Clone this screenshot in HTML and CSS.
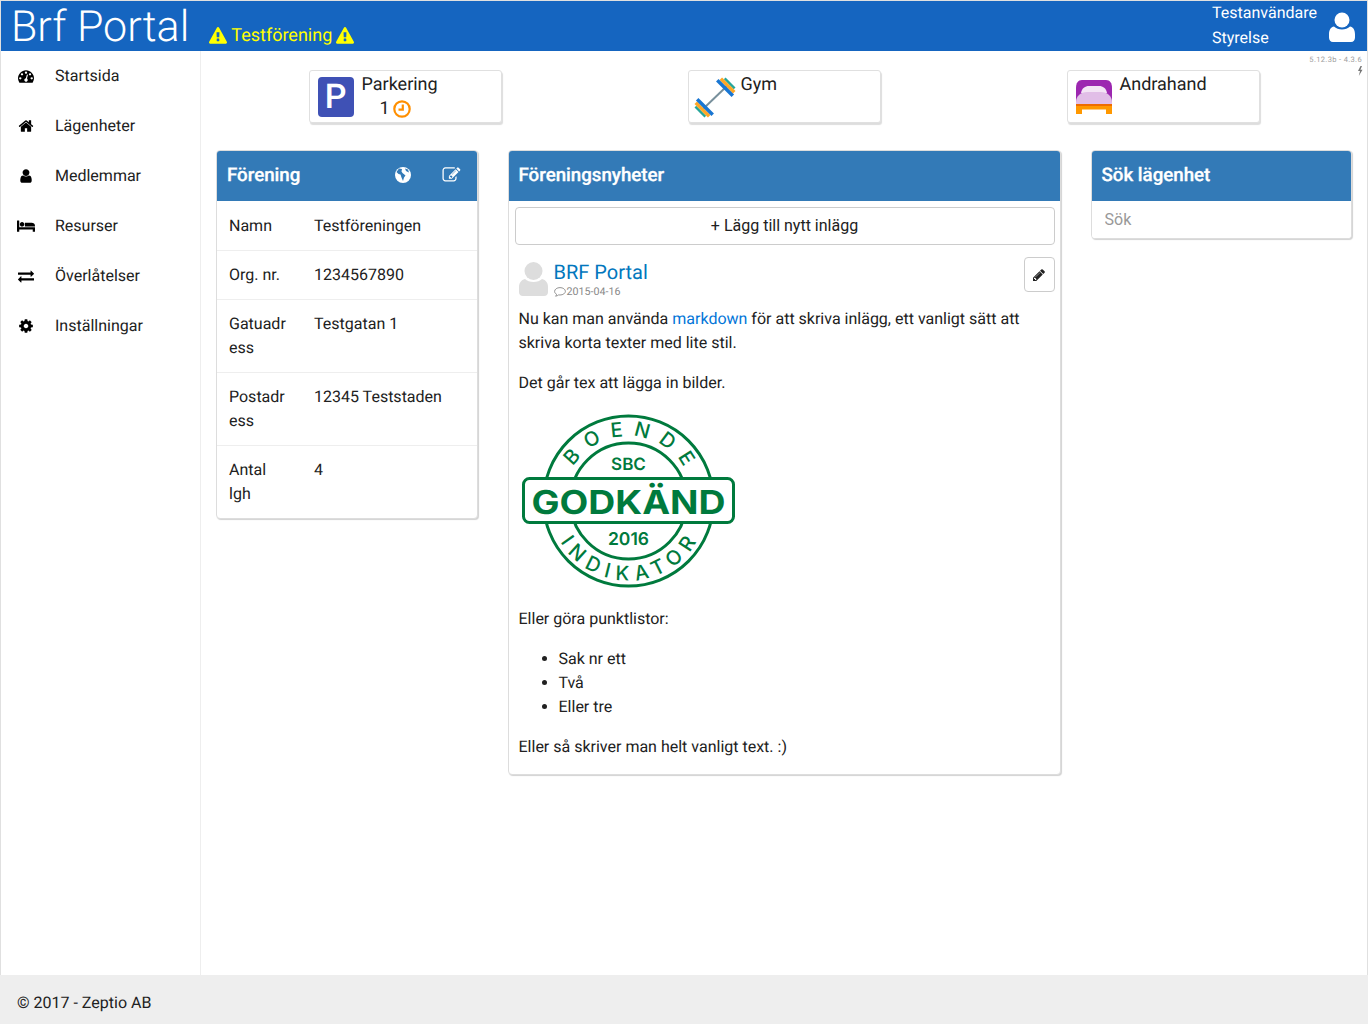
FILE: index.html
```html
<!DOCTYPE html>
<html lang="sv">
<head>
<meta charset="utf-8">
<title>Brf Portal</title>
<link rel="stylesheet" href="styles.css">
</head>
<body>
<div class="page">
  <header class="topbar">
    <div class="brand">Brf Portal</div>
    <div class="org">
      <svg class="warn" viewBox="0 0 1792 1792"><path d="M1024 1375v-190q0-14-9.500-23.500t-22.500-9.500h-192q-13 0-22.500 9.500t-9.500 23.500v190q0 14 9.500 23.500t22.500 9.500h192q13 0 22.500-9.500t9.500-23.500zm-2-374l18-459q0-12-10-19-13-11-24-11h-220q-11 0-24 11-10 7-10 21l17 457q0 10 10 16.500t24 6.500h185q14 0 23.500-6.500t10.500-16.500zm-14-934l768 1408q35 63-2 126-17 29-46.500 46t-63.500 17h-1536q-34 0-63.500-17t-46.500-46q-37-63-2-126l768-1408q17-31 47-49t65-18 65 18 47 49z"/></svg>
      <span>Testförening</span>
      <svg class="warn" viewBox="0 0 1792 1792"><path d="M1024 1375v-190q0-14-9.500-23.500t-22.500-9.500h-192q-13 0-22.500 9.500t-9.500 23.500v190q0 14 9.500 23.500t22.500 9.500h192q13 0 22.500-9.500t9.500-23.500zm-2-374l18-459q0-12-10-19-13-11-24-11h-220q-11 0-24 11-10 7-10 21l17 457q0 10 10 16.500t24 6.500h185q14 0 23.500-6.500t10.500-16.500zm-14-934l768 1408q35 63-2 126-17 29-46.500 46t-63.500 17h-1536q-34 0-63.500-17t-46.500-46q-37-63-2-126l768-1408q17-31 47-49t65-18 65 18 47 49z"/></svg>
    </div>
    <div class="user">
      <div class="user-text"><div>Testanvändare</div><div>Styrelse</div></div>
      <svg class="user-icon" viewBox="0 0 26 30"><circle cx="13" cy="8" r="7.500"/><path d="M5 14.500c2 2 5 3 8 3s6-1 8-3c3 .5 5 3 5 8v3c0 2.500-1.500 4.500-4 4.500H4c-2.500 0-4-2-4-4.500v-3c0-5 2-7.500 5-8z"/></svg>
    </div>
  </header>
  <div class="middle">
    <nav class="sidebar">
      <a class="nav-item"><svg class="nav-icon" viewBox="0 0 1792 1792"><path d="M384 1152q0-53-37.500-90.500t-90.500-37.500-90.500 37.500-37.500 90.500 37.500 90.500 90.500 37.500 90.500-37.500 37.500-90.500zm192-448q0-53-37.500-90.500t-90.500-37.500-90.500 37.500-37.500 90.500 37.500 90.500 90.500 37.500 90.500-37.500 37.500-90.500zm428 481l101-382q6-26-7.500-48.500t-38.500-29.500-48 6.500-30 39.500l-101 382q-60 5-107 43.500t-63 98.500q-20 77 20 146t117 89 146-20 89-117q16-60-6-117t-72-91zm660-33q0-53-37.500-90.500t-90.500-37.500-90.500 37.500-37.500 90.500 37.500 90.500 90.500 37.500 90.500-37.500 37.500-90.500zm-640-640q0-53-37.500-90.500t-90.500-37.500-90.500 37.500-37.500 90.500 37.500 90.500 90.500 37.500 90.500-37.500 37.500-90.500zm448 192q0-53-37.500-90.500t-90.500-37.500-90.500 37.500-37.500 90.500 37.500 90.500 90.500 37.500 90.500-37.500 37.500-90.500zm320 448q0 261-141 483-19 29-54 29h-1402q-35 0-54-29-141-221-141-483 0-182 71-348t191-286 286-191 348-71 348 71 286 191 191 286 71 348z"/></svg><span>Startsida</span></a>
      <a class="nav-item"><svg class="nav-icon" viewBox="0 0 1792 1792"><path d="M1472 992v480q0 26-19 45t-45 19h-384v-384h-256v384h-384q-26 0-45-19t-19-45v-480q0-1 .5-3t.5-3l575-474 575 474q1 2 1 6zm223-69l-62 74q-8 9-21 11h-3q-13 0-21-7l-692-577-692 577q-12 8-24 7-13-2-21-11l-62-74q-8-10-7-23.500t11-21.500l719-599q32-26 76-26t76 26l244 204v-195q0-14 9-23t23-9h192q14 0 23 9t9 23v408l219 182q10 8 11 21.500t-7 23.500z"/></svg><span>Lägenheter</span></a>
      <a class="nav-item"><svg class="nav-icon" viewBox="0 0 1792 1792"><path d="M1536 1399q0 109-62.500 187t-150.500 78h-854q-88 0-150.500-78t-62.500-187q0-85 8.500-160.500t31.500-152 58.500-131 94-89 134.500-34.500q131 128 313 128t313-128q76 0 134.500 34.500t94 89 58.500 131 31.500 152 8.500 160.500zm-256-887q0 159-112.500 271.500t-271.500 112.500-271.500-112.500-112.500-271.500 112.500-271.500 271.500-112.500 271.500 112.500 112.500 271.500z"/></svg><span>Medlemmar</span></a>
      <a class="nav-item"><svg class="nav-icon" viewBox="0 0 2048 1792"><path d="M256 1024h1728q26 0 45 19t19 45v448h-256v-256H256v256H0V320q0-26 19-45t45-19h128q26 0 45 19t19 45v704zm576-320q0-106-75-181t-181-75-181 75-75 181 75 181 181 75 181-75 75-181zm1216 256v-64q0-159-112.500-271.500T1664 512H960q-26 0-45 19t-19 45v384h1152z"/></svg><span>Resurser</span></a>
      <a class="nav-item"><svg class="nav-icon" viewBox="0 0 1792 1792"><path d="M1792 1184v192q0 13-9.500 22.500t-22.500 9.500h-1376v192q0 13-9.500 22.500t-22.500 9.500q-12 0-24-10l-319-320q-9-9-9-22 0-14 9-23l320-320q9-9 23-9 13 0 22.500 9.500t9.500 22.500v192h1376q13 0 22.500 9.500t9.500 22.500zm0-544q0 14-9 23l-320 320q-9 9-23 9-13 0-22.500-9.500t-9.500-22.500v-192h-1376q-13 0-22.500-9.500t-9.500-22.500v-192q0-13 9.500-22.500t22.500-9.500h1376v-192q0-14 9-23t23-9q12 0 24 10l319 319q9 9 9 23z"/></svg><span>Överlåtelser</span></a>
      <a class="nav-item"><svg class="nav-icon" viewBox="0 0 1792 1792"><path d="M1152 896q0-106-75-181t-181-75-181 75-75 181 75 181 181 75 181-75 75-181zm512-109v222q0 12-8 23t-20 13l-185 28q-19 54-39 91 35 50 107 138 10 12 10 25t-9 23q-27 37-99 108t-94 71q-12 0-26-9l-138-108q-44 23-91 38-16 136-29 186-7 28-36 28h-222q-14 0-24.500-8.500t-11.500-21.500l-28-184q-49-16-90-37l-141 107q-10 9-25 9-14 0-25-11-126-114-165-168-7-10-7-23 0-12 8-23 15-21 51-66.500t54-70.500q-27-50-41-99l-183-27q-13-2-21-12.500t-8-23.500v-222q0-12 8-23t19-13l186-28q14-46 39-92-40-57-107-138-10-12-10-24 0-10 9-23 26-36 98.500-107.500t94.500-71.500q13 0 26 10l138 107q44-23 91-38 16-136 29-186 7-28 36-28h222q14 0 24.500 8.500t11.500 21.500l28 184q49 16 90 37l142-107q9-9 24-9 13 0 25 10 129 119 165 170 7 8 7 22 0 12-8 23-15 21-51 66.500t-54 70.500q26 50 41 98l183 28q13 2 21 12.500t8 23.500z"/></svg><span>Inställningar</span></a>
    </nav>
    <main class="content">
      <div class="version">5.12.3b - 4.3.6<svg class="bolt" viewBox="0 0 6 10"><path d="M3.500 0 1 5h2L1.800 10 5.500 3.800H3.400L5 0z"/></svg></div>
      <div class="shortcuts">
        <div class="shortcut-col">
          <a class="shortcut">
            <div class="parking">P</div>
            <div class="shortcut-text">
              <div>Parkering</div>
              <div class="shortcut-count"><span>1</span><svg class="clock" viewBox="0 0 18 18"><circle cx="9" cy="9" r="7.700"/><path d="M9.800 4.500v5.200H5.500"/></svg></div>
            </div>
          </a>
        </div>
        <div class="shortcut-col">
          <a class="shortcut">
            <svg class="barbell" viewBox="0 0 42 42">
              <path class="bar" d="M9 33 33 10"/>
              <g transform="translate(9 33) rotate(135)"><rect class="pl-g" x="2.500" y="-7" width="2.500" height="14"/><rect class="pl-o" x="-1" y="-9.500" width="3.500" height="19"/><rect class="pl-b" x="-4.500" y="-11" width="3.500" height="22"/></g>
              <g transform="translate(33 10) rotate(-45)"><rect class="pl-g" x="2.500" y="-7" width="2.500" height="14"/><rect class="pl-o" x="-1" y="-9.500" width="3.500" height="19"/><rect class="pl-b" x="-4.500" y="-11" width="3.500" height="22"/></g>
            </svg>
            <div class="shortcut-text gym"><div>Gym</div></div>
          </a>
        </div>
        <div class="shortcut-col">
          <a class="shortcut">
            <svg class="bed" viewBox="0 0 36 34">
              <path class="b-head" d="M0 25V8C0 3 2 0 6 0h24c4 0 6 3 6 8v17z"/>
              <path class="b-pillow" d="M5 13C6 8 9 6 13 6h10c4 0 7 2 8 7z"/>
              <path class="b-blanket" d="M0 25v-3c0-6 5-10 11-10h14c6 0 11 4 11 10v3z"/>
              <rect class="b-strip" y="24" width="36" height="2.500"/>
              <path class="b-base" d="M0 26h36v8h-6v-4.500H6V34H0z"/>
            </svg>
            <div class="shortcut-text bedtext"><div>Andrahand</div></div>
          </a>
        </div>
      </div>
      <div class="columns">
        <div class="col-side">
          <section class="panel">
            <div class="panel-head">
              <h2>Förening</h2>
              <div class="head-icons">
                <svg class="head-icon" viewBox="0 0 18 18"><circle cx="9" cy="9" r="8"/><path class="globe-cut" d="M8 3 5 2.500 2.500 6l2 2 2 .5 1 3 1.500 3.500 1-3.500 1.500-2-3-2.500-1-1.500zM11 2.500l1 2.500 3 1.500-1-3z"/></svg>
                <svg class="head-icon edit" viewBox="0 0 1900 1792"><path d="M888 1184l116-116-152-152-116 116v56h96v96h56zm440-720q-16-16-33 1l-350 350q-17 17-1 33t33-1l350-350q17-17 1-33zm80 594v190q0 119-84.500 203.500t-203.500 84.500h-832q-119 0-203.500-84.500t-84.500-203.500v-832q0-119 84.500-203.500t203.500-84.500h832q63 0 117 25 15 7 18 23 3 17-9 29l-49 49q-14 14-32 8-23-6-45-6h-832q-66 0-113 47t-47 113v832q0 66 47 113t113 47h832q66 0 113-47t47-113v-126q0-13 9-22l64-64q15-15 35-7t20 29zm-96-738l288 288-672 672h-288v-288zm444 132l-92 92-288-288 92-92q28-28 68-28t68 28l152 152q28 28 28 68t-28 68z"/></svg>
              </div>
            </div>
            <dl class="info">
              <div class="info-row"><dt>Namn</dt><dd>Testföreningen</dd></div>
              <div class="info-row"><dt>Org. nr.</dt><dd>1234567890</dd></div>
              <div class="info-row"><dt>Gatuadress</dt><dd>Testgatan 1</dd></div>
              <div class="info-row"><dt>Postadress</dt><dd>12345 Teststaden</dd></div>
              <div class="info-row"><dt>Antal lgh</dt><dd>4</dd></div>
            </dl>
          </section>
        </div>
        <div class="col-main">
          <section class="panel">
            <div class="panel-head"><h2>Föreningsnyheter</h2></div>
            <div class="news">
              <button class="add-post">+ Lägg till nytt inlägg</button>
              <article class="post">
                <div class="post-head">
                  <svg class="avatar" viewBox="0 0 29 34"><circle cx="14.500" cy="9" r="9"/><path d="M6 17c2 2 5 3 8.500 3s6.500-1 8.500-3c4 1 6 4 6 8v5c0 2.500-1.500 4-4 4H4c-2.500 0-4-1.500-4-4v-5c0-4 2-7 6-8z"/></svg>
                  <div class="post-meta">
                    <div class="post-title">BRF Portal</div>
                    <div class="post-date"><svg class="comment" viewBox="0 0 12 10"><path d="M6 .6C3 .6.6 2.300.6 4.400c0 1.200.8 2.200 2 2.900-.2.700-.6 1.400-1 1.900 1.200-.2 2.200-.7 3-1.300.5.100.9.100 1.400.100 3 0 5.400-1.700 5.400-3.700S9 .6 6 .6z"/></svg>2015-04-16</div>
                  </div>
                  <button class="edit-post"><svg class="pencil" viewBox="0 0 1792 1792"><path d="M491 1536l91-91-235-235-91 91v107h128v128h107zm523-928q0-22-22-22-10 0-17 7l-542 542q-7 7-7 17 0 22 22 22 10 0 17-7l542-542q7-7 7-17zm-54-192l416 416-832 832h-416v-416zm683 96q0 53-37 90l-166 166-416-416 166-165q36-38 90-38 53 0 91 38l235 234q37 39 37 91z"/></svg></button>
                </div>
                <p>Nu kan man använda <a class="link">markdown</a> för att skriva inlägg, ett vanligt sätt att skriva korta texter med lite stil.</p>
                <p>Det går tex att lägga in bilder.</p>
                <p class="logo-wrap">
                  <svg class="logo" viewBox="0 1 220 180">
                    <defs>
                      <path id="arcTop" d="M44.500 91A65 65 0 0 1 174.500 91"/>
                      <path id="arcBot" d="M30 91A79.500 79.500 0 0 0 189 91"/>
                    </defs>
                    <circle class="ring" cx="109.500" cy="91" r="85"/>
                    <circle class="ring" cx="109.500" cy="91" r="58"/>
                    <rect class="band" x="4.500" y="68.500" width="210" height="44" rx="6"/>
                    <text class="logo-arc arc-top"><textPath href="#arcTop" startOffset="52.500%">BOENDE</textPath></text>
                    <text class="logo-arc arc-bot"><textPath href="#arcBot" startOffset="51.400%">INDIKATOR</textPath></text>
                    <text class="logo-sbc" x="109.500" y="59.500">SBC</text>
                    <text class="logo-god" x="109.500" y="104" textLength="194" lengthAdjust="spacingAndGlyphs">GODKÄND</text>
                    <text class="logo-year" x="109.500" y="135">2016</text>
                  </svg>
                </p>
                <p>Eller göra punktlistor:</p>
                <ul>
                  <li>Sak nr ett</li>
                  <li>Två</li>
                  <li>Eller tre</li>
                </ul>
                <p class="post-last">Eller så skriver man helt vanligt text. :)</p>
              </article>
            </div>
          </section>
        </div>
        <div class="col-side">
          <section class="panel">
            <div class="panel-head"><h2>Sök lägenhet</h2></div>
            <div class="search-wrap"><input class="search" type="text" placeholder="Sök"></div>
          </section>
        </div>
      </div>
    </main>
  </div>
  <footer class="footer">© 2017 - Zeptio AB</footer>
</div>
</body>
</html>
```
FILE: styles.css
```css
* { box-sizing: border-box; }
html, body { margin: 0; padding: 0; }
body {
  font-family: Roboto, "Liberation Sans", sans-serif;
  font-size: 16px;
  line-height: 24px;
  color: #212121;
  background: #fff;
  text-rendering: geometricPrecision;
}
.page {
  height: 1024px;
  display: flex;
  flex-direction: column;
  border: 1px solid #e0e0e0;
  border-bottom: 0;
}
.topbar {
  height: 50px;
  flex: none;
  background: #1565c0;
  display: flex;
  align-items: flex-start;
  padding-left: 10px;
  color: #fff;
}
.brand {
  font-size: 43px;
  font-weight: 300;
  line-height: 52px;
}
.org {
  display: flex;
  align-items: center;
  gap: 4px;
  margin: 23px 0 0 20px;
  color: #ff0;
  font-size: 18px;
  line-height: 24px;
}
.warn { width: 18px; height: 18px; fill: #ff0; }
.user {
  margin-left: auto;
  display: flex;
  padding-right: 12px;
}
.user-text { width: 117px; font-size: 16px; line-height: 25px; }
.user-text div:first-child { margin-top: -1px; }
.user-icon { width: 26px; height: 30px; fill: #fff; margin-top: 11px; }
.middle { flex: 1; display: flex; min-height: 0; }
.sidebar {
  width: 200px;
  flex: none;
  border-right: 1px solid #eee;
}
.nav-item {
  display: flex;
  align-items: center;
  height: 50px;
  color: #212121;
}
.nav-icon {
  width: 18px;
  height: 16px;
  margin-left: 16px;
  margin-right: 20px;
  fill: #000;
  flex: none;
}
.content { flex: 1; position: relative; min-width: 0; }
.version {
  position: absolute;
  top: 4px;
  right: 5px;
  font-size: 7.500px;
  line-height: 10px;
  letter-spacing: .35px;
  color: #9e9e9e;
  text-align: right;
}
.bolt { display: block; width: 6px; height: 10px; fill: #757575; margin: 1px -1px 0 auto; }
.shortcuts {
  display: grid;
  grid-template-columns: repeat(3, 379px);
  justify-content: center;
  padding-top: 19px;
}
.shortcut-col { display: flex; justify-content: center; }
.shortcut {
  width: 193px;
  height: 53px;
  border: 1px solid #e0e0e0;
  border-radius: 3px;
  box-shadow: 1px 2px 1px #ddd;
  display: flex;
  background: #fff;
}
.parking {
  width: 36px;
  height: 40px;
  margin: 6px 0 0 8px;
  background: #3f51b5;
  border-radius: 4px;
  color: #fff;
  font-family: Roboto, "Liberation Sans", sans-serif;
  font-weight: 500;
  font-size: 34px;
  line-height: 40px;
  text-align: center;
  flex: none;
}
.shortcut-text { font-size: 18px; line-height: 24px; margin: 2px 0 0 8px; color: #212121; }
.shortcut-count { display: flex; align-items: center; padding-left: 18px; }
.clock { width: 18px; height: 18px; margin-left: 3px; fill: none; stroke: #ff8f00; stroke-width: 2.200; }
.barbell { width: 42px; height: 42px; margin: 5px 0 0 5px; flex: none; }
.bar { stroke: #78909c; stroke-width: 2; fill: none; }
.pl-g { fill: #26a69a; }
.pl-o { fill: #ffa726; }
.pl-b { fill: #1976d2; }
.gym { margin-left: 5px; }
.bed { width: 36px; height: 34px; margin: 9px 0 0 8px; flex: none; }
.b-head { fill: #9c27b0; }
.b-pillow { fill: #f3e5f5; }
.b-blanket { fill: #e1bee7; }
.b-strip { fill: #ef6c00; }
.b-base { fill: #ff9800; }
.bedtext { margin-left: 8px; }
.columns { display: flex; align-items: flex-start; margin-top: 27px; }
.col-side { flex: 0 0 25%; padding: 0 15px; }
.col-main { flex: 0 0 50%; padding: 0 15px; }
.panel {
  border: 1px solid #ddd;
  border-radius: 4px;
  box-shadow: 1px 1px 1px rgba(0,0,0,.18);
  background: #fff;
  overflow: hidden;
}
.panel-head {
  height: 50px;
  background: #337ab7;
  color: #fff;
  display: flex;
  align-items: center;
  padding: 0 10px 2px;
  border-bottom: 1px solid #337ab7;
}
.panel-head h2 {
  margin: 0;
  font-size: 18.700px;
  font-weight: 500;
  line-height: 24px;
  -webkit-text-stroke: .3px #fff;
}
.head-icons { margin-left: auto; display: flex; align-items: center; gap: 30px; padding-right: 5px; }
.head-icon { width: 18px; height: 18px; fill: #fff; }
.globe-cut { fill: #337ab7; }
.edit { width: 20px; }
.info { margin: 1px 0 0; }
.info-row {
  display: grid;
  grid-template-columns: 61px 1fr;
  column-gap: 24px;
  padding: 12px 12px;
  border-bottom: 1px solid #eee;
}
.info-row:last-child { border-bottom: 0; }
.info dt { overflow-wrap: anywhere; }
.info dd { margin: 0; }
.news { padding: 6px 5px 0 6px; }
.add-post {
  display: block;
  width: 100%;
  height: 38px;
  background: #fff;
  border: 1px solid #ccc;
  border-radius: 4px;
  font: inherit;
  color: #212121;
  padding: 0;
}
.post { padding: 0 0 0 4px; }
.post-head { display: flex; height: 62px; padding-top: 12px; align-items: flex-start; }
.avatar { width: 29px; height: 34px; fill: #ddd; flex: none; margin-top: 5px; }
.post-meta { margin-left: 6px; margin-top: 1px; }
.post-title { font-size: 20px; line-height: 28px; color: #0277bd; }
.post-date { font-size: 10.700px; line-height: 11px; color: #888; display: flex; align-items: center; }
.comment { width: 12px; height: 10px; fill: none; stroke: #888; stroke-width: .9; margin-right: 1px; }
.edit-post {
  margin-left: auto;
  width: 31px;
  height: 35px;
  background: #fff;
  border: 1px solid #ccc;
  border-radius: 4px;
  padding: 0;
  display: flex;
  align-items: center;
  justify-content: center;
}
.pencil { width: 14px; height: 14px; fill: #222; }
.post p { margin: 0 0 16px; }
.post ul { margin: 0 0 16px; padding-left: 40px; }
.post .post-last { margin-bottom: 15px; }
.link { color: #0275d8; }
.logo-wrap { height: 180px; }
.logo { display: block; width: 220px; height: 180px; }
.ring { fill: none; stroke: #007a3d; stroke-width: 3; }
.band { fill: #fff; stroke: #007a3d; stroke-width: 3; }
.logo-arc, .logo-sbc, .logo-god, .logo-year {
  font-family: Inter, "Liberation Sans", sans-serif;
  fill: #007a3d;
  text-anchor: middle;
}
.logo-arc { font-size: 20px; font-weight: 500; }
.arc-top { letter-spacing: 10px; }
.arc-bot { letter-spacing: 7px; }
.logo-sbc { font-size: 17px; font-weight: 600; }
.logo-god { font-size: 33px; font-weight: 700; }
.logo-year { font-size: 17.500px; font-weight: 600; }
.search-wrap { padding: 0; }
.search {
  display: block;
  width: 100%;
  height: 37px;
  border: 0;
  padding: 0 13px 1px;
  font: inherit;
  color: #212121;
  background: #fff;
  outline: 0;
}
.search::placeholder { color: #999; opacity: 1; }
.footer {
  flex: none;
  height: 49px;
  background: #eee;
  padding: 16px 17px 0;
  margin: 0 -1px;
  color: #212121;
}
```
